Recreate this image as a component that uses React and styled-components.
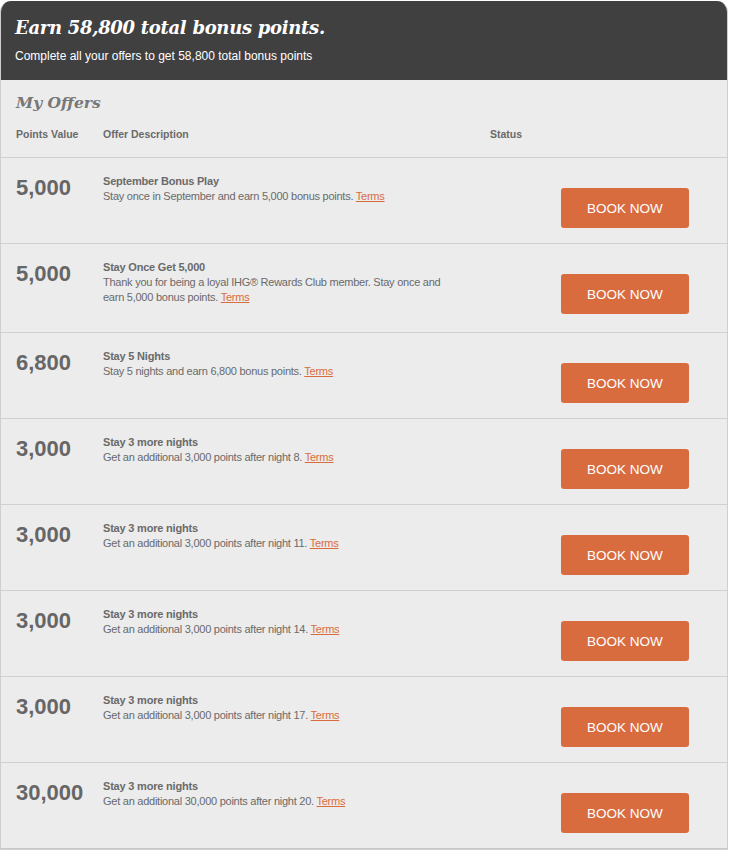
import styled, { createGlobalStyle } from "styled-components"

const Global = createGlobalStyle`
  body {
    margin: 0;
    padding-top: 1px;
    background: #ffffff;
    font-family: "Liberation Sans", Arial, sans-serif;
  }
`

const Panel = styled.div`
  width: 728px;
  box-sizing: border-box;
  border: 1px solid #cfcfcf;
  border-top: none;
  border-radius: 11px 11px 0 0;
  background: #ececec;
  overflow: hidden;
`

const Banner = styled.div`
  background: #404040;
  height: 79px;
  box-sizing: border-box;
  padding: 14px 14px 0;
  color: #ffffff;
`

const BannerTitle = styled.h1`
  margin: 0;
  font-family: "DejaVu Serif", Georgia, serif;
  font-style: italic;
  font-weight: bold;
  font-size: 18px;
  line-height: 26px;
  letter-spacing: -0.3px;
`

const BannerText = styled.p`
  margin: 7px 0 0;
  font-size: 12px;
  line-height: 16px;
`

const Heading = styled.h2`
  margin: 0;
  padding: 13px 15px 0;
  font-family: "DejaVu Serif", Georgia, serif;
  font-style: italic;
  font-weight: bold;
  font-size: 15.5px;
  line-height: 20px;
  color: #777777;
`

const Grid = styled.div`
  display: grid;
  grid-template-columns: 87px 387px 1fr;
  padding-left: 15px;
`

const HeadRow = styled(Grid)`
  padding-top: 14px;
  padding-bottom: 16px;
  border-bottom: 1px solid #d0d0d0;
`

const HeadCell = styled.div`
  font-size: 10.5px;
  font-weight: bold;
  line-height: 14px;
  color: #6a6a6a;
`

const Row = styled(Grid)`
  border-bottom: 1px solid #d0d0d0;
  &:last-child {
    border-bottom: 1px solid #c8c8c8;
  }
`

const Points = styled.div`
  padding-top: 17px;
  font-size: 22px;
  font-weight: bold;
  line-height: 26px;
  color: #666666;
`

const Desc = styled.div`
  padding: 16px 0 27px;
  max-width: 350px;
  font-size: 11px;
  line-height: 15px;
  letter-spacing: -0.25px;
  color: #6a6a6a;
`

const OfferName = styled.div`
  font-weight: bold;
  letter-spacing: -0.2px;
`

const Terms = styled.a`
  color: #d96c3f;
  text-decoration: underline;
  cursor: pointer;
`

const Status = styled.div`
  padding: 30px 0 15px 71px;
`

const BookButton = styled.button`
  width: 128px;
  height: 40px;
  border: none;
  border-radius: 3px;
  background: #d96c3f;
  color: #ffffff;
  font-family: "Liberation Sans", Arial, sans-serif;
  font-size: 13.5px;
  cursor: pointer;
`

const offers = [
  { points: "5,000", name: "September Bonus Play", text: "Stay once in September and earn 5,000 bonus points." },
  { points: "5,000", name: "Stay Once Get 5,000", text: "Thank you for being a loyal IHG® Rewards Club member. Stay once and earn 5,000 bonus points." },
  { points: "6,800", name: "Stay 5 Nights", text: "Stay 5 nights and earn 6,800 bonus points." },
  { points: "3,000", name: "Stay 3 more nights", text: "Get an additional 3,000 points after night 8." },
  { points: "3,000", name: "Stay 3 more nights", text: "Get an additional 3,000 points after night 11." },
  { points: "3,000", name: "Stay 3 more nights", text: "Get an additional 3,000 points after night 14." },
  { points: "3,000", name: "Stay 3 more nights", text: "Get an additional 3,000 points after night 17." },
  { points: "30,000", name: "Stay 3 more nights", text: "Get an additional 30,000 points after night 20." },
]

export default function App() {
  return (
    <>
      <Global />
      <Panel>
        <Banner>
          <BannerTitle>Earn 58,800 total bonus points.</BannerTitle>
          <BannerText>Complete all your offers to get 58,800 total bonus points</BannerText>
        </Banner>
        <Heading>My Offers</Heading>
        <HeadRow>
          <HeadCell>Points Value</HeadCell>
          <HeadCell>Offer Description</HeadCell>
          <HeadCell>Status</HeadCell>
        </HeadRow>
        {offers.map((o, i) => (
          <Row key={i}>
            <Points>{o.points}</Points>
            <Desc>
              <OfferName>{o.name}</OfferName>
              {o.text} <Terms>Terms</Terms>
            </Desc>
            <Status>
              <BookButton>BOOK NOW</BookButton>
            </Status>
          </Row>
        ))}
      </Panel>
    </>
  )
}
